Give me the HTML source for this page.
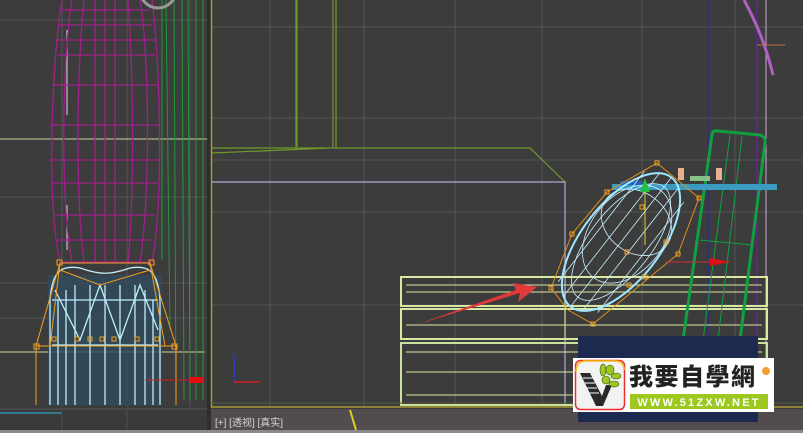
<!DOCTYPE html>
<html><head><meta charset="utf-8"><style>
html,body{margin:0;padding:0;background:#3b3b3b;overflow:hidden}
svg{display:block}
</style></head><body>
<svg width="803" height="433" viewBox="0 0 803 433" xmlns="http://www.w3.org/2000/svg">
<rect width="803" height="433" fill="#3c3c3c"/>
<g stroke="#555" stroke-width="1">
<line x1="62" y1="0" x2="62" y2="407"/><line x1="127" y1="0" x2="127" y2="407"/><line x1="190" y1="0" x2="190" y2="407"/>
<line x1="0" y1="20" x2="207" y2="20"/><line x1="0" y1="197" x2="207" y2="197"/><line x1="0" y1="283" x2="207" y2="283"/><line x1="0" y1="318" x2="207" y2="318"/>
</g>
<line x1="0" y1="139" x2="207" y2="139" stroke="#c8d2a0"/>
<line x1="0" y1="352" x2="205" y2="352" stroke="#c8d2a0"/>
<line x1="67" y1="30" x2="67" y2="115" stroke="#ddd"/>
<line x1="67" y1="205" x2="67" y2="250" stroke="#ddd"/>
<g stroke="#1e9a3a" stroke-width="1">
<line x1="162" y1="0" x2="162" y2="260"/><line x1="166" y1="0" x2="170" y2="330"/><line x1="174" y1="0" x2="176" y2="400"/><line x1="182" y1="0" x2="184" y2="400"/><line x1="188" y1="0" x2="190" y2="400"/><line x1="196" y1="0" x2="196" y2="400"/><line x1="203" y1="0" x2="203" y2="400"/>
</g>
<g fill="none" stroke="#a0208a" stroke-width="1.3">
<path d="M62 0 C52 60 46 200 60 262 L152 262 C164 200 160 60 152 0"/>
<path d="M72 0 C62 60 60 200 72 262 M140 0 C150 60 150 200 140 262"/>
<path d="M84 0 C76 80 76 200 84 262 M128 0 C134 80 134 200 128 262"/>
<path d="M95 0 V262 M115 0 V262 M105 0 V262"/>
<path d="M56 40 H156 M52 85 H158 M50 125 H160 M50 160 H160 M52 183 H158 M55 215 H155 M58 240 H152 M62 10 H150 M58 25 H152 M57 55 H155"/>
</g>
<circle cx="158" cy="-10" r="18" fill="none" stroke="#999" stroke-width="3"/>
<rect x="48" y="275" width="114" height="130" fill="#2f4b5c" opacity="0.8"/>
<g fill="none" stroke="#bfefff" stroke-width="1.3">
<path d="M50 405 V300 C52 270 62 265 80 268 C100 275 110 275 130 268 C148 265 158 270 160 300 V405"/>
<path d="M58 405 V300 M66 405 V290 M75 405 V285 M90 405 V285 M105 405 V285 M120 405 V285 M135 405 V285 M145 405 V290 M153 405 V300"/>
<path d="M55 290 L80 340 L100 285 L120 340 L140 285 L158 330"/>
<path d="M52 300 H158 M52 345 H158"/>
</g>
<g fill="none" stroke="#f0a020" stroke-width="1">
<path d="M36 405 V346 L60 263 L150 263 L176 346 V405"/>
<path d="M36 346 H176 M60 263 L50 346 M150 263 L165 346"/>
<path d="M60 270 L100 285 L150 270"/>
</g>
<g fill="none" stroke="#f0a020" stroke-width="1">
<rect x="57" y="260" width="5" height="5"/><rect x="149" y="260" width="5" height="5"/>
<rect x="34" y="344" width="5" height="5"/><rect x="172" y="344" width="5" height="5"/>
<rect x="52" y="337" width="4" height="4"/><rect x="75" y="337" width="4" height="4"/><rect x="88" y="337" width="4" height="4"/><rect x="100" y="337" width="4" height="4"/><rect x="112" y="337" width="4" height="4"/><rect x="135" y="337" width="4" height="4"/><rect x="155" y="337" width="4" height="4"/>
</g>
<line x1="145" y1="380" x2="190" y2="380" stroke="#d02020"/>
<rect x="190" y="377" width="14" height="6" fill="#e01010"/>
<rect x="0" y="407" width="209" height="26" fill="#3a3a3a"/>
<line x1="0" y1="413" x2="62" y2="413" stroke="#2f8fb0" stroke-width="1.5"/>
<line x1="62" y1="410" x2="62" y2="433" stroke="#4d4d4d"/><line x1="127" y1="410" x2="127" y2="433" stroke="#4d4d4d"/>
<line x1="0" y1="409" x2="209" y2="409" stroke="#555"/>
<rect x="207" y="0" width="4" height="433" fill="#2e2e2e"/>
<g stroke="#555" stroke-width="1">
<line x1="270" y1="0" x2="270" y2="407"/><line x1="364" y1="0" x2="364" y2="407"/><line x1="455" y1="0" x2="455" y2="407"/><line x1="542" y1="0" x2="542" y2="407"/><line x1="735" y1="0" x2="735" y2="407"/><line x1="642" y1="0" x2="642" y2="407"/>
<line x1="211" y1="27" x2="803" y2="27"/><line x1="211" y1="118" x2="803" y2="118"/><line x1="211" y1="212" x2="803" y2="212"/><line x1="211" y1="305" x2="803" y2="305"/><line x1="211" y1="160" x2="803" y2="160"/>
</g>
<g fill="none" stroke="#6e9a2a" stroke-width="1.2">
<path d="M297 0 V147 M333 0 V147 M296 0 V147 M336 0 V148"/>
<path d="M212 148 H530 L565 182 M212 153 L330 148"/>
</g>
<path d="M212 182 H565 V407" fill="none" stroke="#b0a8d8" stroke-width="1.2"/>
<line x1="708" y1="0" x2="708" y2="407" stroke="#2a2a9a" stroke-width="1.3"/>
<line x1="757" y1="0" x2="757" y2="407" stroke="#6a20a0" stroke-width="1.3"/>
<line x1="766" y1="0" x2="766" y2="407" stroke="#c8a8d8" stroke-width="1"/>
<path d="M744 0 C755 20 766 45 773 75" fill="none" stroke="#b060c0" stroke-width="3"/>
<path d="M757 45 H785" stroke="#c07040"/>
<g fill="none" stroke="#d8e8a0" stroke-width="2">
<rect x="401" y="277" width="366" height="29"/>
<rect x="401" y="309" width="366" height="30"/>
<rect x="401" y="343" width="366" height="62" stroke="#c8e0a0"/>
</g>
<g stroke="#d8e8a0" stroke-width="1">
<line x1="406" y1="285" x2="762" y2="285"/><line x1="406" y1="292" x2="762" y2="292"/><line x1="406" y1="325" x2="762" y2="325"/><line x1="406" y1="352" x2="762" y2="352"/><line x1="406" y1="372" x2="762" y2="372"/><line x1="406" y1="395" x2="762" y2="395"/>
<line x1="565" y1="295" x2="565" y2="340"/>
</g>
<g fill="none" stroke="#10a040" stroke-width="3">
<path d="M683 340 L712 135 Q712 130 718 131 L760 135 Q766 137 765 143 L740 340"/>
</g>
<g stroke="#10a040" stroke-width="1"><line x1="730" y1="135" x2="703" y2="340"/><line x1="742" y1="136" x2="718" y2="340"/><line x1="700" y1="240" x2="752" y2="245"/></g>
<rect x="612" y="184" width="165" height="6" fill="#3a9ac0"/>
<rect x="620" y="181" width="22" height="4" fill="#2060c0"/>
<g transform="translate(621 242) rotate(-52)">
<ellipse rx="82" ry="39" fill="none" stroke="#9fe6ff" stroke-width="2"/>
<g fill="none" stroke="#c8f0ff" stroke-width="0.8">
<ellipse rx="70" ry="31"/><ellipse cx="10" rx="55" ry="37"/><ellipse cx="25" rx="30" ry="38"/>
<line x1="-82" y1="0" x2="82" y2="0"/><line x1="-78" y1="-12" x2="78" y2="-12"/><line x1="-78" y1="12" x2="78" y2="12"/><line x1="-70" y1="-25" x2="70" y2="-25"/><line x1="-70" y1="25" x2="70" y2="25"/>
</g>
</g>
<polygon points="657,163 699,198 678,254 593,324 568,310 551,288 572,234 607,192" fill="none" stroke="#e0901c" stroke-width="1"/>
<g fill="none" stroke="#f0a020"><rect x="655" y="161" width="4" height="4"/><rect x="697" y="196" width="4" height="4"/><rect x="676" y="252" width="4" height="4"/><rect x="591" y="322" width="4" height="4"/><rect x="549" y="286" width="4" height="4"/><rect x="570" y="232" width="4" height="4"/><rect x="605" y="190" width="4" height="4"/><rect x="640" y="205" width="4" height="4"/><rect x="625" y="250" width="4" height="4"/><rect x="643" y="275" width="4" height="4"/><rect x="627" y="283" width="4" height="4"/><rect x="664" y="240" width="4" height="4"/></g>
<line x1="645" y1="180" x2="645" y2="245" stroke="#d8d830"/>
<polygon points="645,178 650,192 640,192" fill="#20c040"/>
<line x1="665" y1="262" x2="730" y2="262" stroke="#d03030"/>
<polygon points="710,258 730,262 710,266" fill="#e01010"/>
<rect x="678" y="168" width="6" height="12" fill="#e8b090"/><rect x="716" y="168" width="6" height="12" fill="#e8b090"/>
<rect x="690" y="176" width="20" height="5" fill="#88c088"/>
<path d="M415 325 L520 293 L518 302 L537 287 L513 283 L516 290 Z" fill="#e23a3a"/>
<line x1="234" y1="355" x2="234" y2="382" stroke="#2a3ad0" stroke-width="1.5"/>
<line x1="234" y1="382" x2="260" y2="382" stroke="#d02020" stroke-width="1.5"/>
<rect x="211.5" y="-2" width="594" height="409" fill="none" stroke="#a89a30" stroke-width="1.5"/>
<line x1="211" y1="403" x2="803" y2="403" stroke="#5a5a3a"/>
<rect x="211" y="409" width="592" height="24" fill="#524c4e"/>
<rect x="0" y="430" width="803" height="3" fill="#8a8a8a"/>
<text x="215" y="426" font-family="Liberation Sans, 'Noto Sans CJK SC', sans-serif" font-size="10" fill="#d8d4d4">[+] [透视] [真实]</text>
<path d="M350 410 L356 430" stroke="#e0d020" stroke-width="2"/>
<rect x="578" y="336" width="180" height="86" fill="#1c2a50"/>
<rect x="573" y="358" width="201" height="54" fill="#fff"/>
<rect x="575.5" y="360.5" width="49" height="49" rx="5" fill="#f2f2f2" stroke="#e83030" stroke-width="1.5"/>
<path d="M576 372 Q576 361 586 361 L615 361 Q624 361 624 370" fill="none" stroke="#f0c010" stroke-width="1.5"/>
<path d="M580 373 L590 373 L602 396 L606 385 L612 385 L603 406 L596 406 Z" fill="#2a2a2a"/>
<g stroke="#fff" stroke-width="1"><line x1="583" y1="378" x2="593" y2="378"/><line x1="585" y1="383" x2="595" y2="383"/><line x1="587" y1="388" x2="597" y2="388"/><line x1="589" y1="393" x2="599" y2="393"/></g>
<g fill="#9cc820" stroke="#3a5a10" stroke-width="0.6"><ellipse cx="603" cy="370" rx="3" ry="6"/><ellipse cx="610" cy="370" rx="4" ry="5"/><ellipse cx="616" cy="376" rx="5" ry="3"/><ellipse cx="614" cy="384" rx="5" ry="3"/><ellipse cx="606" cy="380" rx="4" ry="4"/></g>
<text x="629" y="385" font-family="'Noto Sans CJK TC', 'WenQuanYi Zen Hei', sans-serif" font-weight="900" font-size="24" fill="#222" letter-spacing="1.5">我要自學網</text>
<circle cx="766" cy="371" r="4" fill="#f0a030"/>
<rect x="630" y="394" width="138" height="15" fill="#9cc820"/>
<text x="699" y="406" text-anchor="middle" font-family="Liberation Sans, sans-serif" font-weight="bold" font-size="11" fill="#fff" letter-spacing="2.2">WWW.51ZXW.NET</text>
</svg>
</body></html>
